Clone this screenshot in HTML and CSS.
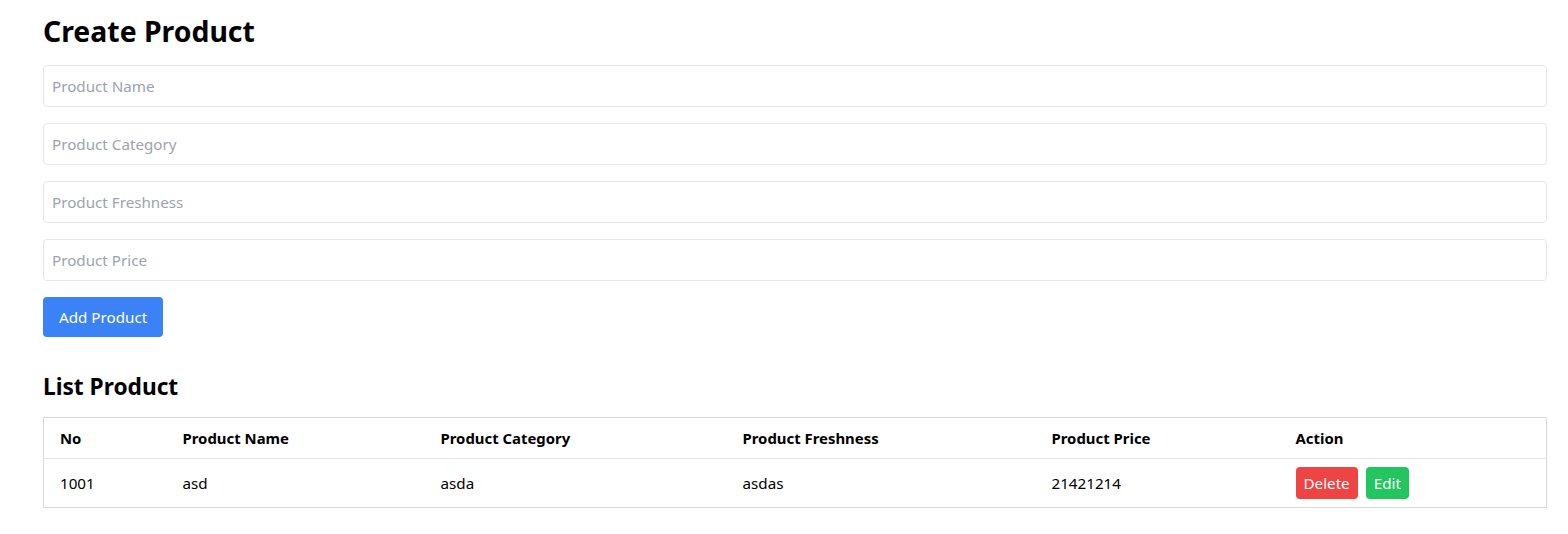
FILE: index.html
```html
<!DOCTYPE html>
<html>
<head>
<meta charset="utf-8">
<link rel="stylesheet" href="styles.css">
</head>
<body>
<div class="page">
  <h1 class="title">Create Product</h1>
  <form class="form">
    <input class="field" type="text" placeholder="Product Name">
    <input class="field" type="text" placeholder="Product Category">
    <input class="field" type="text" placeholder="Product Freshness">
    <input class="field" type="text" placeholder="Product Price">
    <button type="button" class="btn btn-blue">Add Product</button>
  </form>
  <h2 class="subtitle">List Product</h2>
  <table class="table">
    <colgroup>
      <col class="c1"><col class="c2"><col class="c3"><col class="c4"><col class="c5"><col class="c6">
    </colgroup>
    <thead>
      <tr><th>No</th><th>Product Name</th><th>Product Category</th><th>Product Freshness</th><th>Product Price</th><th>Action</th></tr>
    </thead>
    <tbody>
      <tr>
        <td>1001</td><td>asd</td><td>asda</td><td>asdas</td><td>21421214</td>
        <td><div class="actions"><button type="button" class="btn-sm btn-red">Delete</button><button type="button" class="btn-sm btn-green">Edit</button></div></td>
      </tr>
    </tbody>
  </table>
</div>
</body>
</html>
```
FILE: styles.css
```css
* { box-sizing: border-box; }
html, body { margin: 0; padding: 0; background: #fff; }
body { font-family: "Noto Sans", "Open Sans", sans-serif; color: #000; font-size: 15.2px; line-height: 24px; }
.page { padding: 13px 21px 20px 43px; }
.title { margin: 0 0 16px; font-size: 28.4px; line-height: 36px; font-weight: 700; }
.form { display: flex; flex-direction: column; gap: 16px; align-items: flex-start; }
.field { width: 100%; height: 42px; padding: 8px; border: 1px solid #e5e7eb; border-radius: 4px; font: inherit; color: #000; outline: none; }
.field::placeholder { color: #9ca3af; }
.btn { font: inherit; border: 0; border-radius: 4px; padding: 8px 16px; height: 40px; cursor: pointer; }
.btn-blue { background: #3b82f6; color: #fff; }
.subtitle { margin: 34px 0 14px; font-size: 22.7px; line-height: 32px; font-weight: 700; }
.table { width: 100%; border-collapse: collapse; border: 1px solid #d9d9d9; table-layout: fixed; }
.c1 { width: 123px; } .c2 { width: 258px; } .c3 { width: 302px; } .c4 { width: 309px; } .c5 { width: 244px; } .c6 { width: auto; }
.table th, .table td { text-align: left; padding: 8px 16px; }
.table th { font-weight: 700; font-size: 14.9px; }
.table thead tr { border-bottom: 1px solid #e5e7eb; }
.actions { display: flex; gap: 8px; }
.btn-sm { font: inherit; border: 0; border-radius: 4px; padding: 4px 8px; height: 32px; color: #fff; cursor: pointer; }
.btn-red { background: #ef4444; }
.btn-green { background: #22c55e; }
```
